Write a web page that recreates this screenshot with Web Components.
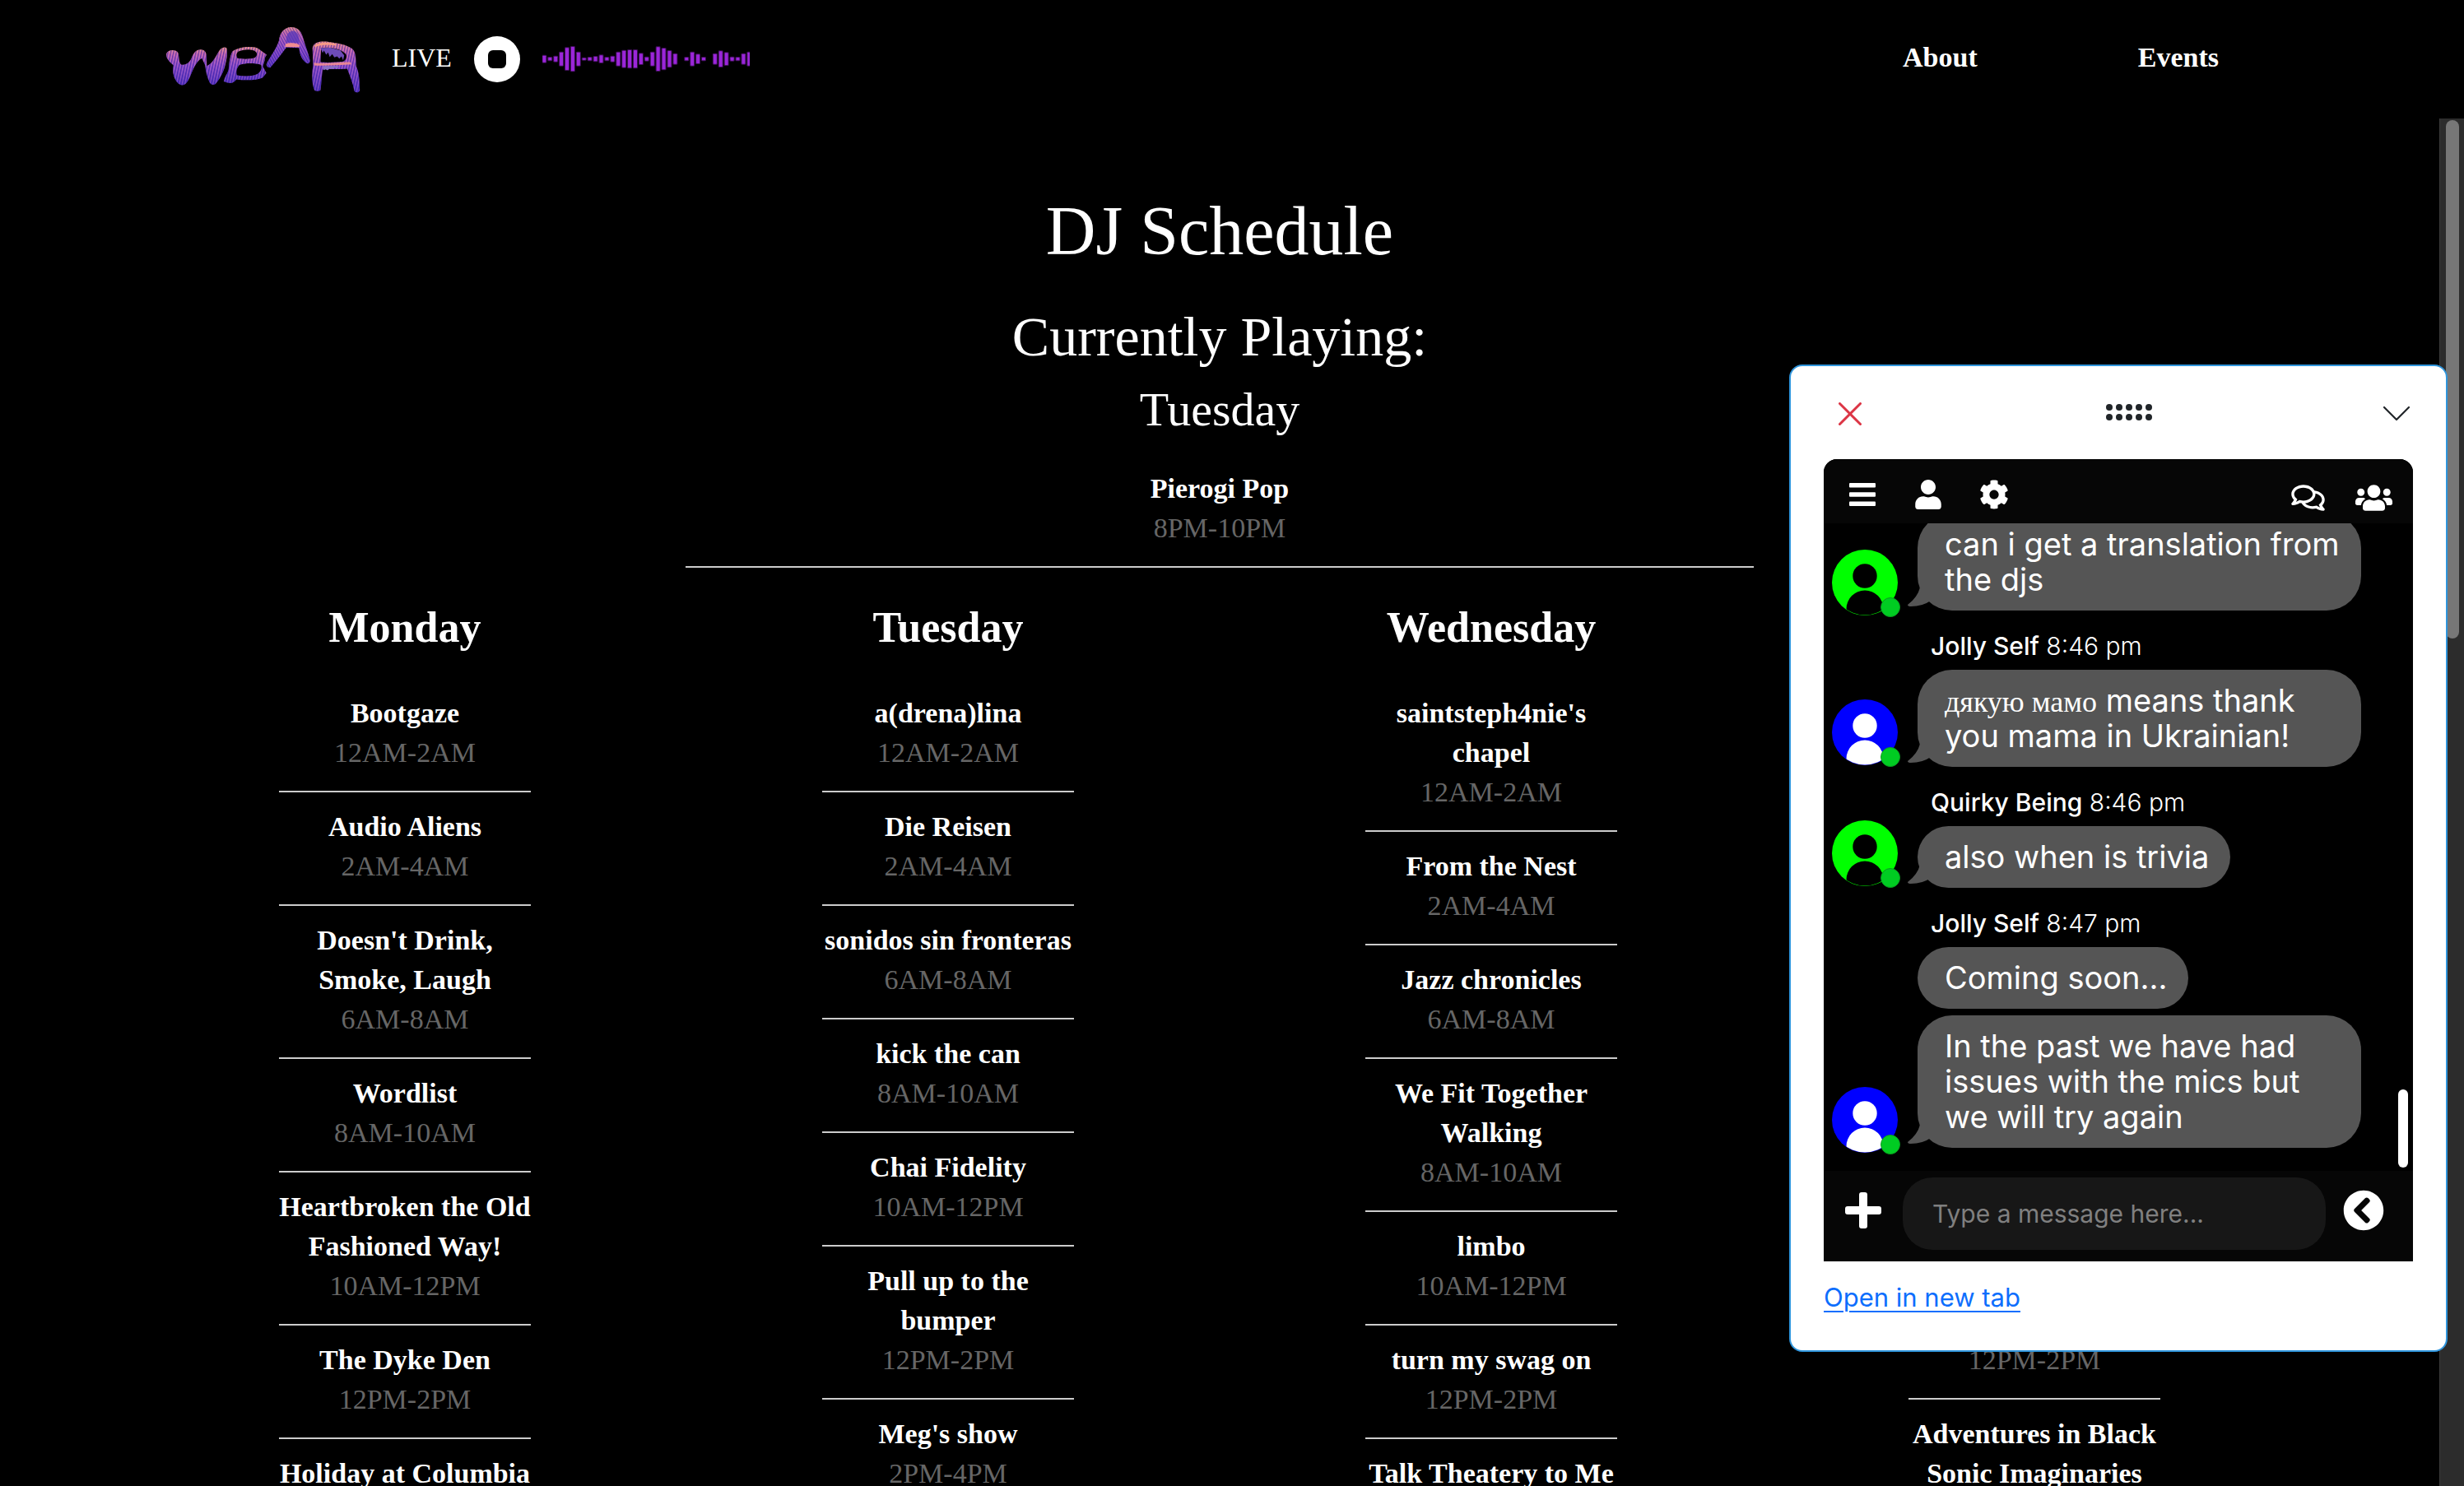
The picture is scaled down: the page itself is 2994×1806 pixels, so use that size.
<!DOCTYPE html>
<html lang="en">
<head>
<meta charset="utf-8">
<title>WBAR – DJ Schedule</title>
<style>
html,body{margin:0;height:100%;background:#000;color:#fff;overflow:hidden}
body{font-family:"Liberation Serif","Times New Roman",serif;font-size:34px;line-height:48px}
</style>
</head>
<body>
<wbar-app></wbar-app>

<template id="t-app">
<style>
:host{display:flex;flex-direction:column;height:100vh;position:relative;overflow:hidden;background:#000}
.body{display:flex;flex:1;min-height:0}
main{flex:1;min-width:0;overflow:hidden;padding-top:87px;box-sizing:border-box}
h1,h2,h3{margin:0;font-weight:400;text-align:center}
h1{font-size:84px;line-height:100px;margin-bottom:37px}
h2{font-size:68px;line-height:82px;margin-bottom:14px}
h3{font-size:58px;line-height:68px;margin-bottom:20px}
.now{width:1298px;max-width:90%;margin:0 auto 42px}
.days{display:grid;grid-template-columns:repeat(4,1fr);padding:0 162px}
chat-popup{position:absolute;right:20px;bottom:163px}
</style>
<site-header></site-header>
<div class="body">
<main>
<h1>DJ Schedule</h1>
<h2>Currently Playing:</h2>
<h3>Tuesday</h3>
<show-slot class="now" name="Pierogi Pop" time="8PM-10PM"></show-slot>
<div class="days">
<day-column day="Monday">
<show-slot name="Bootgaze" time="12AM-2AM"></show-slot>
<show-slot name="Audio Aliens" time="2AM-4AM"></show-slot>
<show-slot name="Doesn't Drink, Smoke, Laugh" time="6AM-8AM"></show-slot>
<show-slot name="Wordlist" time="8AM-10AM"></show-slot>
<show-slot name="Heartbroken the Old Fashioned Way!" time="10AM-12PM"></show-slot>
<show-slot name="The Dyke Den" time="12PM-2PM"></show-slot>
<show-slot name="Holiday at Columbia"></show-slot>
</day-column>
<day-column day="Tuesday">
<show-slot name="a(drena)lina" time="12AM-2AM"></show-slot>
<show-slot name="Die Reisen" time="2AM-4AM"></show-slot>
<show-slot name="sonidos sin fronteras" time="6AM-8AM"></show-slot>
<show-slot name="kick the can" time="8AM-10AM"></show-slot>
<show-slot name="Chai Fidelity" time="10AM-12PM"></show-slot>
<show-slot name="Pull up to the bumper" time="12PM-2PM"></show-slot>
<show-slot name="Meg's show" time="2PM-4PM"></show-slot>
</day-column>
<day-column day="Wednesday">
<show-slot name="saintsteph4nie's chapel" time="12AM-2AM"></show-slot>
<show-slot name="From the Nest" time="2AM-4AM"></show-slot>
<show-slot name="Jazz chronicles" time="6AM-8AM"></show-slot>
<show-slot name="We Fit Together Walking" time="8AM-10AM"></show-slot>
<show-slot name="limbo" time="10AM-12PM"></show-slot>
<show-slot name="turn my swag on" time="12PM-2PM"></show-slot>
<show-slot name="Talk Theatery to Me"></show-slot>
</day-column>
<day-column day="">
<show-slot></show-slot>
<show-slot></show-slot>
<show-slot></show-slot>
<show-slot></show-slot>
<show-slot></show-slot>
<show-slot lines="2" time="12PM-2PM"></show-slot>
<show-slot name="Adventures in Black Sonic Imaginaries"></show-slot>
</day-column>
</div>
</main>
<scroll-track></scroll-track>
</div>
<chat-popup></chat-popup>
</template>

<template id="t-header">
<style>
:host{display:block}
header{display:flex;align-items:center;height:144px;padding:0 298px 0 201px;box-sizing:border-box}
.logo{display:block;line-height:0;margin-right:38px}
.live{font-size:32px;padding-bottom:4px;margin-right:27px}
button{width:56px;height:56px;border:0;border-radius:50%;background:#fff;padding:0;display:grid;place-items:center;margin-right:27px}
button i{width:22px;height:22px;border-radius:6px;background:#000}
nav{display:flex;gap:195px;margin-left:auto;padding-bottom:4px}
nav a{color:#fff;text-decoration:none;font-weight:700}
</style>
<header>
<a class="logo" href="#" aria-label="WBAR home">
<svg width="237" height="81" viewBox="18 33 711 244">
<defs>
<linearGradient id="g" x1="0" y1="0" x2="0" y2="1"><stop offset="0" stop-color="#f79a86"/><stop offset=".18" stop-color="#c868b4"/><stop offset=".5" stop-color="#8d4bd0"/><stop offset="1" stop-color="#4f30c4"/></linearGradient>
<pattern id="s" width="10" height="10" patternUnits="userSpaceOnUse" patternTransform="rotate(12)"><rect width="4" height="10" fill="#2e1a9c" opacity=".6"/><rect x="6" width="2" height="10" fill="#ee8fae" opacity=".45"/></pattern>
<pattern id="d" width="9" height="9" patternUnits="userSpaceOnUse" patternTransform="rotate(-28)"><rect width="4" height="9" fill="#2e1a9c" opacity=".55"/><rect x="6" width="2" height="9" fill="#ee8fae" opacity=".4"/></pattern>
<path id="w" d="M20 135C22 118 55 115 63 130C68 145 64 165 75 174C90 174 103 170 112 150C118 132 128 118 146 118C162 118 168 130 167 150L168 178C185 172 198 150 210 128C218 112 232 106 240 112C245 125 242 150 236 172C230 200 215 225 205 238C198 250 184 250 178 238C170 220 164 200 162 175L150 150C140 155 132 165 122 182C110 205 104 232 90 244C80 252 68 248 58 236C44 218 42 195 46 176C34 165 18 152 20 135Z"/>
<path id="b" fill-rule="evenodd" d="M262 125c20-18 80-22 95-10l30 22c-5 8-8 14-7 20l-7 23 13 24-14 17c-20 8-56 12-96 6-10 14-20 18-46 8 5-20 15-30 18-45 2-22 4-48 14-65zM282 126c20-10 48-10 63-2 10 8 8 18-2 24-20 6-45 5-63 2-5-8-5-16 2-24zM288 174c25-8 60-6 79 0 4 15-2 26-14 34-25 10-50 8-75 4-4-15 0-28 10-38z"/>
<path id="a" d="M386 172C398 147 424 114 432 86C435 56 452 36 477 36C499 36 512 48 519 71C529 106 540 132 546 158C544 174 534 170 526 162C512 148 508 132 506 112L460 110C448 124 422 162 400 184C392 184 387 180 386 172Z"/>
<path id="r" fill-rule="evenodd" d="M555 112c5-25 35-24 60-22 40 5 78 14 90 30 10 15 8 40 10 60 10 20 12 50 13 88-5 10-14 8-20 2-5-30-18-60-26-82-30 3-60 0-90 3-4 25-4 50-8 76-6 4-16 4-22 0-10-25-10-60-5-90 0-25-2-45-2-65zM586 112c30-5 76 2 92 24 4 10 0 20-10 26-30 4-62 4-84 2z"/>
</defs>
<use href="#w" fill="url(#g)"/><use href="#w" fill="url(#s)"/>
<use href="#b" fill="url(#g)"/><use href="#b" fill="url(#s)"/>
<use href="#a" fill="url(#g)"/><use href="#a" fill="url(#d)"/>
<path d="M460 92c-4-22 4-40 20-42s28 14 26 44z" fill="#5537b8" opacity=".75"/>
<path d="M456 98c14-6 40-6 52 4l-2 7-52-1z" fill="#f08c90"/>
<use href="#r" fill="url(#g)"/><use href="#r" fill="url(#s)"/>
<path d="M584 112l8 18 5-8 8 15 7-8 6 16 9-10 8 12 10-4 8 8 8-8 6 14 4-18-14-18-36-10z" fill="#6d4bb8"/>
<path d="M560 166c40 6 90-4 134-2l3 8c-40 2-90 6-136 4z" fill="#f08c90" opacity=".9"/>
<path d="M592 178l60 0-6 10-10-4-8 6-8-4-10 8-8-4-6 4z" fill="#8b70c4"/>
<path d="M562 104c14-14 50-14 80-6l-4 5c-24-4-54-4-74 6z" fill="#f79a86"/>
</svg>
</a>
<span class="live">LIVE</span>
<button type="button" aria-label="Stop"><i></i></button>
<svg class="wave" width="252" height="60" viewBox="30 4 756 180" aria-hidden="true"></svg>
<nav><a href="#">About</a><a href="#">Events</a></nav>
</header>
</template>

<template id="t-day">
<style>
:host{display:block}
section{width:306px;margin:0 auto}
h2{margin:0 -60px 31px;min-height:62px;font-size:52px;line-height:62px;text-align:center}
</style>
<section><h2></h2><slot></slot></section>
</template>

<template id="t-slot">
<style>
:host{display:block;text-align:center;border-bottom:2px solid #ccc;padding:18px 0 22px}
b,span{display:block;min-height:48px}
:host([lines="2"]) b{min-height:96px}
span{color:#666}
</style>
<b></b><span></span>
</template>

<template id="t-scroll">
<style>
:host{display:block;width:30px;background:#2c2c2c;box-sizing:border-box;border-left:1px solid #3c3c3c;padding:2px 6px 0 7px}
div{height:630px;border-radius:8px;background:#777}
</style>
<div></div>
</template>

<template id="t-msg">
<style>
:host{display:block}
.meta{font-size:30px;line-height:36px;font-weight:300;padding:25px 0 11px 130px}
.meta b{font-weight:500}
.row{display:flex;align-items:flex-end}
.who{position:relative;width:80px;height:80px;margin:-10px 24px 2px 10px;flex:none}
:host([low]) .who{margin-bottom:-6px}
.who svg{display:block}
.who i{position:absolute;right:-3px;bottom:-2px;width:22px;height:22px;border-radius:50%;background:#0c2;border:1px solid #0a9a20}
.bubble{position:relative;background:#555;border-radius:42px;padding:16px 26px 16px 33px;max-width:539px;box-sizing:border-box;font-size:38px;line-height:43px}
.tail{position:absolute;left:-12px;bottom:2px}
:host([plain]) .who{visibility:hidden;height:0;margin-top:0;margin-bottom:0}
:host([plain]) .tail{display:none}
:host([plain]){margin-bottom:8px}
</style>
<div class="meta"><b></b> <span></span></div>
<div class="row">
<div class="who"><svg width="80" height="80" viewBox="0 0 80 80"><clipPath id="c"><circle cx="40" cy="40" r="39.5"/></clipPath><circle class="bg" cx="40" cy="40" r="40"/><g class="fg" clip-path="url(#c)"><circle cx="40" cy="32" r="14.7"/><path d="M17.5 80v-8a22.5 22.5 0 0 1 45 0v8z"/></g></svg><i></i></div>
<div class="bubble"><svg class="tail" width="30" height="26" viewBox="0 0 30 26"><path d="M15 0Q12 12 0 21Q0 23 4 23Q18 23 28 16V0z" fill="#555"/></svg><slot></slot></div>
</div>
</template>

<template id="t-chat">
<style>
:host{display:flex;flex-direction:column;width:716px;padding:0 40px 40px;border:2px solid #2f95dc;border-radius:16px;background:#fff;font-family:Inter,sans-serif}
button{border:0;background:none;padding:0;color:inherit;display:grid;place-items:center}
.bar{display:flex;justify-content:space-between;padding:28px 4px 25px 2px;color:#212529}
.bar button{height:60px;min-width:60px}
.bar .x{color:#dc3545}
.bar .v{min-width:32px}
.chat{display:flex;flex-direction:column;flex:none;height:975px;border-radius:16px 16px 0 0;background:#000;color:#fff;overflow:hidden}
.top{display:flex;justify-content:space-between;height:78px;flex:none;background:#060606;padding:0 8px 0 7px;box-sizing:border-box}
.top div{display:flex;padding-top:8px}
.top div+div{padding-top:16px}
.top button{width:80px}
svg{fill:currentColor;display:block}
.log{flex:1;min-height:0;overflow:hidden;display:flex;flex-direction:column;justify-content:flex-end;position:relative;padding-bottom:28px}
.thumb{position:absolute;right:6px;bottom:4px;width:12px;height:95px;border-radius:6px;background:#fff}
.uk{font-family:"Liberation Serif",serif;font-size:36px;line-height:36px}
form{display:flex;align-items:flex-start;height:110px;flex:none;box-sizing:border-box;padding:8px 14px 0 0;background:#060606;margin:0}
form button{height:80px}
.plus{width:96px}
.send{width:92px}
input{flex:1;min-width:0;height:88px;border:0;border-radius:36px;background:#171717;color:#fff;font:30px Inter,sans-serif;padding:0 36px;box-sizing:border-box}
input::placeholder{color:#808080}
.open{display:inline-block;margin-top:20px;font-size:31px;line-height:48px;color:#0d6efd;text-underline-offset:5px;text-decoration-thickness:2px}
.foot{display:flex}
</style>
<div class="bar">
<button class="x" type="button" aria-label="Close"><svg width="28" height="28" viewBox="0 0 28 28"><path d="M1.5 1.5l25 25M26.5 1.5l-25 25" stroke="currentColor" stroke-width="3" stroke-linecap="round"/></svg></button>
<button type="button" aria-label="Move"><svg class="dots" width="58" height="24" viewBox="0 0 58 24"></svg></button>
<button class="v" type="button" aria-label="Collapse"><svg width="32" height="20" viewBox="0 0 32 20"><path d="M1 2l15 15L31 2" fill="none" stroke="currentColor" stroke-width="2.2" stroke-linecap="round" stroke-linejoin="round"/></svg></button>
</div>
<div class="chat">
<div class="top">
<div>
<button type="button" aria-label="Menu"><svg width="32" height="28" viewBox="0 0 32 28"><rect width="32" height="5.500" rx="1"/><rect y="11.250" width="32" height="5.500" rx="1"/><rect y="22.500" width="32" height="5.500" rx="1"/></svg></button>
<button type="button" aria-label="Profile"><svg width="32" height="36" viewBox="0 0 448 512"><path d="M224 256c70.700 0 128-57.300 128-128S294.700 0 224 0 96 57.300 96 128s57.300 128 128 128zm89.600 32h-16.700c-22.200 10.200-46.900 16-72.900 16s-50.600-5.800-72.900-16h-16.700C60.200 288 0 348.200 0 422.400V464c0 26.500 21.500 48 48 48h352c26.500 0 48-21.500 48-48v-41.600c0-74.200-60.200-134.400-134.400-134.400z"/></svg></button>
<button type="button" aria-label="Settings"><svg width="36" height="36" viewBox="0 0 512 512"><path d="M487.400 315.700l-42.600-24.600c4.300-23.200 4.300-47 0-70.200l42.600-24.600c4.900-2.800 7.100-8.600 5.500-14-11.100-35.600-30-67.800-54.700-94.600-3.800-4.100-10-5.100-14.800-2.300L380.800 110c-17.900-15.400-38.500-27.300-60.800-35.100V25.800c0-5.600-3.900-10.500-9.400-11.700-36.700-8.200-74.300-7.800-109.200 0-5.500 1.200-9.400 6.100-9.400 11.700V75c-22.200 7.900-42.800 19.800-60.800 35.100L88.700 85.500c-4.900-2.800-11-1.900-14.800 2.300-24.700 26.700-43.600 58.900-54.700 94.600-1.700 5.400.6 11.200 5.500 14L67.300 221c-4.300 23.200-4.300 47 0 70.200l-42.600 24.600c-4.900 2.800-7.100 8.600-5.500 14 11.100 35.600 30 67.800 54.700 94.600 3.800 4.100 10 5.100 14.800 2.300l42.600-24.600c17.900 15.400 38.500 27.300 60.800 35.100v49.200c0 5.600 3.900 10.500 9.400 11.700 36.700 8.200 74.300 7.800 109.200 0 5.500-1.200 9.400-6.100 9.400-11.700v-49.200c22.200-7.900 42.800-19.800 60.800-35.100l42.600 24.600c4.900 2.800 11 1.900 14.800-2.300 24.700-26.700 43.600-58.900 54.700-94.600 1.500-5.500-.7-11.300-5.600-14.100zM256 336c-44.100 0-80-35.900-80-80s35.900-80 80-80 80 35.900 80 80-35.900 80-80 80z"/></svg></button>
</div>
<div>
<button type="button" aria-label="Chats"><svg width="41" height="36" viewBox="0 0 576 512"><path d="M532 386.200c27.500-27.100 44-61.100 44-98.200 0-80-76.500-146.100-176.200-157.900C368.300 72.500 294.300 32 208 32 93.100 32 0 103.600 0 192c0 37 16.500 71 44 98.200-15.300 30.700-37.300 54.500-37.700 54.900-6.300 6.700-8.100 16.500-4.400 25 3.600 8.500 12 14 21.200 14 53.500 0 96.700-20.200 125.200-38.800 9.200 2.100 18.700 3.700 28.400 4.900C208.100 407.600 281.800 448 368 448c20.800 0 40.800-2.400 59.800-6.800C456.300 459.700 499.400 480 553 480c9.200 0 17.500-5.500 21.200-14 3.600-8.500 1.900-18.300-4.400-25-.4-.3-22.500-24.100-37.800-54.800zm-392.800-92.300L122.100 305c-14.100 9.100-28.500 16.300-43.100 21.400 2.700-4.700 5.400-9.700 8-14.800l15.500-31.100L77.700 256C64.200 242.600 48 220.700 48 192c0-60.700 73.300-112 160-112s160 51.300 160 112-73.300 112-160 112c-16.500 0-33-1.900-49-5.600l-19.800-4.500zM498.300 352l-24.700 24.400 15.500 31.100c2.600 5.100 5.300 10.100 8 14.800-14.600-5.100-29-12.300-43.100-21.400l-17.100-11.100-19.900 4.600c-16 3.700-32.500 5.600-49 5.600-54 0-102.200-20.100-131.300-49.700C338 339.500 416 272.900 416 192c0-3.400-.4-6.700-.7-10C479.700 196.500 528 238.800 528 288c0 28.700-16.200 50.600-29.700 64z"/></svg></button>
<button type="button" aria-label="Users"><svg width="45" height="36" viewBox="0 0 640 512"><path d="M96 224c35.300 0 64-28.700 64-64s-28.700-64-64-64-64 28.700-64 64 28.700 64 64 64zm448 0c35.300 0 64-28.700 64-64s-28.700-64-64-64-64 28.700-64 64 28.700 64 64 64zm32 32h-64c-17.600 0-33.500 7.100-45.100 18.600 40.300 22.100 68.900 62 75.100 109.400h66c17.700 0 32-14.300 32-32v-32c0-35.300-28.700-64-64-64zm-256 0c61.900 0 112-50.100 112-112S381.900 32 320 32 208 82.100 208 144s50.100 112 112 112zm76.800 32h-8.300c-20.800 10-43.900 16-68.500 16s-47.600-6-68.500-16h-8.300C179.600 288 128 339.600 128 403.200V432c0 26.500 21.500 48 48 48h288c26.500 0 48-21.500 48-48v-28.800c0-63.600-51.600-115.200-115.200-115.200zm-223.700-13.400C161.500 263.100 145.600 256 128 256H64c-35.300 0-64 28.700-64 64v32c0 17.700 14.300 32 32 32h65.900c6.300-47.400 34.900-87.300 75.200-109.400z"/></svg></button>
</div>
</div>
<div class="log">
<chat-message bg="#0f0" fg="#000" low>can i get a translation from the djs</chat-message>
<chat-message who="Jolly Self" at="8:46 pm" bg="#00f" fg="#fff"><span class="uk">дякую мамо</span> means thank you mama in Ukrainian!</chat-message>
<chat-message who="Quirky Being" at="8:46 pm" bg="#0f0" fg="#000">also when is trivia</chat-message>
<chat-message who="Jolly Self" at="8:47 pm" plain>Coming soon...</chat-message>
<chat-message bg="#00f" fg="#fff" low>In the past we have had issues with the mics but we will try again</chat-message>
<div class="thumb"></div>
</div>
<form>
<button class="plus" type="button" aria-label="Add"><svg width="44" height="44" viewBox="0 0 44 44"><rect x="17" width="10" height="44" rx="3"/><rect y="17" width="44" height="10" rx="3"/></svg></button>
<input type="text" placeholder="Type a message here..." aria-label="Message">
<button class="send" type="button" aria-label="Send"><svg width="50" height="50" viewBox="0 0 512 512"><path d="M256 504C119 504 8 393 8 256S119 8 256 8s248 111 248 248-111 248-248 248zM142.100 273l135.500 135.500c9.400 9.400 24.600 9.400 33.900 0l17-17c9.400-9.400 9.400-24.600 0-33.900L226.900 256l101.600-101.600c9.400-9.400 9.400-24.600 0-33.900l-17-17c-9.400-9.400-24.600-9.400-33.900 0L142.100 239c-9.400 9.400-9.400 24.600 0 34z"/></svg></button>
</form>
</div>
<div class="foot"><a class="open" href="#">Open in new tab</a></div>
</template>

<script>
class Base extends HTMLElement {
  mount(id) {
    const root = this.attachShadow({ mode: 'open' });
    root.append(document.getElementById(id).content.cloneNode(true));
    return root;
  }
}
customElements.define('site-header', class extends Base {
  connectedCallback() {
    const root = this.mount('t-header');
    // half-heights of the sound bars, left to right
    const bars = [12,5,9,24,40,44,24,3,5,8,13,5,9,24,30,32,32,19,6,24,43,38,29,18,0,5,24,16,5,0,18,28,22,6,5,18,24];
    root.querySelector('.wave').innerHTML = bars.map((h, i) => {
      if (!h) return '';
      const x = 37 + i * 20.75;
      return `<rect x="${x - 9}" y="${93 - h - 3}" width="18" height="${2 * h + 6}" rx="4" fill="#9b26d9" opacity=".4"/><rect x="${x - 6}" y="${93 - h}" width="12" height="${2 * h}" rx="2" fill="#9b26d9"/>`;
    }).join('');
  }
});
customElements.define('show-slot', class extends Base {
  connectedCallback() {
    const root = this.mount('t-slot');
    root.querySelector('b').textContent = this.getAttribute('name') || '';
    root.querySelector('span').textContent = this.getAttribute('time') || '';
  }
});
customElements.define('day-column', class extends Base {
  connectedCallback() {
    this.mount('t-day').querySelector('h2').textContent = this.getAttribute('day');
  }
});
customElements.define('scroll-track', class extends Base {
  connectedCallback() { this.mount('t-scroll'); }
});
customElements.define('chat-message', class extends Base {
  connectedCallback() {
    const root = this.mount('t-msg');
    const who = this.getAttribute('who');
    if (who) {
      root.querySelector('.meta b').textContent = who;
      root.querySelector('.meta span').textContent = this.getAttribute('at');
    } else root.querySelector('.meta').remove();
    root.querySelector('.bg').setAttribute('fill', this.getAttribute('bg') || 'none');
    root.querySelector('.fg').setAttribute('fill', this.getAttribute('fg') || 'none');
  }
});
customElements.define('chat-popup', class extends Base {
  connectedCallback() {
    const root = this.mount('t-chat');
    let dots = '';
    for (const y of [4, 16]) for (let i = 0; i < 5; i++) dots += `<circle cx="${5 + i * 12}" cy="${y}" r="4"/>`;
    root.querySelector('.dots').innerHTML = dots;
  }
});
customElements.define('wbar-app', class extends Base {
  connectedCallback() { this.mount('t-app'); }
});
</script>
</body>
</html>
